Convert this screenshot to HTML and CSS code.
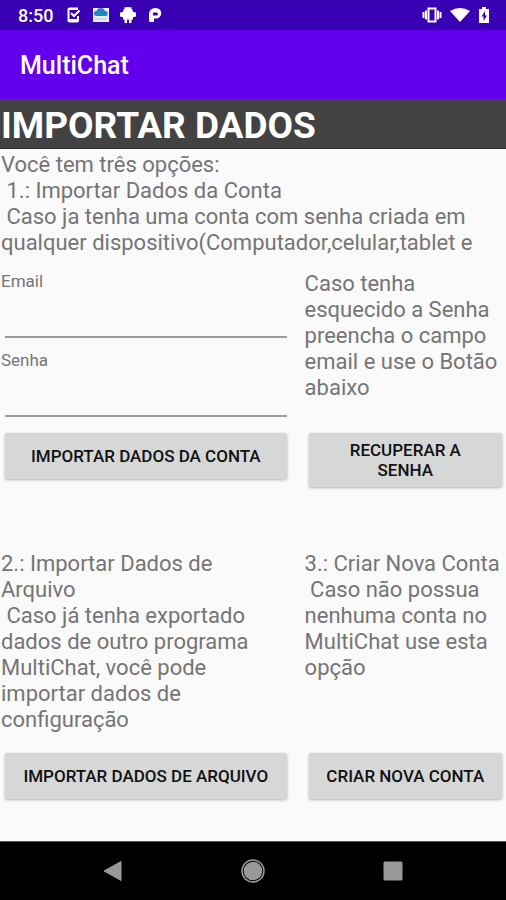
FILE: index.html
```html
<!DOCTYPE html>
<html lang="pt-BR">
<head>
<meta charset="utf-8">
<meta name="viewport" content="width=device-width, initial-scale=1">
<title>MultiChat</title>
<link rel="stylesheet" href="styles.css">
</head>
<body>
<div class="status">
  <span class="clock">8:50</span>
  <div class="status-group notices">
    <svg class="icon" viewBox="0 0 16 18" aria-hidden="true"><path d="M12 10v4.500a1 1 0 0 1-1 1H3.500a1 1 0 0 1-1-1v-11a1 1 0 0 1 1-1H12" fill="none" stroke="#fff" stroke-width="2"/><path d="M5 7l3 3L13.500 4.500" fill="none" stroke="#fff" stroke-width="2"/><path d="M3 13h9v3H3zM3 2h9v2H3z" fill="#fff"/></svg>
    <svg class="icon" viewBox="0 0 16 18" aria-hidden="true"><path d="M0 2h16v14H0z" fill="#e8eef2"/><path d="M3.500 10a2.500 2.500 0 0 1 0-5A4.500 4.500 0 0 1 12 5a2.500 2.500 0 0 1 .5 5z" fill="#2484c2"/><path d="M2 13h12" stroke="#b9c3bd"/></svg>
    <svg class="icon" viewBox="0 0 16 18" aria-hidden="true"><path d="M3 6a5 5 0 0 1 10 0h1.500a1.500 1.500 0 0 1 1.500 1.500v2a1.500 1.500 0 0 1-1.500 1.500H13v2.500h-1.500V16a1.300 1.300 0 0 1-2.600 0v-2.500H7.100V16a1.300 1.300 0 0 1-2.600 0v-2.500H3V11H1.500A1.500 1.500 0 0 1 0 9.500v-2A1.500 1.500 0 0 1 1.500 6z" fill="#fff"/><path d="M4.500 1l1.500 2M11.500 1L10 3" stroke="#fff"/></svg>
    <svg class="icon" viewBox="0 0 16 18" aria-hidden="true"><path fill-rule="evenodd" d="M2 12V8a6 6 0 0 1 6-6h1a5.300 5.300 0 0 1 0 10.600H7V16H3.500a1.500 1.500 0 0 1-1.500-1.500zM6 6.500h3.500a1 1 0 0 1 0 3H6z" fill="#fff"/></svg>
  </div>
  <div class="status-group signals">
    <svg class="icon vibrate" viewBox="0 0 20 16" aria-hidden="true"><path d="M6.500 1.500h7v13h-7z" fill="none" stroke="#fff" stroke-width="2"/><path d="M4 3.500v9M16 3.500v9" stroke="#fff" stroke-width="2"/><path d="M1.500 5v6M18.500 5v6" stroke="#fff" stroke-width="2"/></svg>
    <svg class="icon wifi" viewBox="0 0 20 16" aria-hidden="true"><path d="M0 4Q10-2 20 4L10 15z" fill="#fff"/></svg>
    <svg class="icon battery" viewBox="0 0 12 18" aria-hidden="true"><path d="M1 3h3V1h4v2h3v14H1z" fill="#fff"/><path d="M7 5l-3.500 5.500h2V15L9 9.500H7z" fill="#3a00b0"/></svg>
  </div>
</div>
<header class="appbar">MultiChat</header>
<main>
  <h1>IMPORTAR DADOS</h1>
  <p class="text intro">Você tem três opções:
 1.: Importar Dados da Conta
 Caso ja tenha uma conta com senha criada em qualquer dispositivo(Computador,celular,tablet e</p>
  <section class="columns account">
    <form class="fields">
      <label for="email">Email</label>
      <input id="email" type="email">
      <label for="senha">Senha</label>
      <input id="senha" type="password">
    </form>
    <p class="text">Caso tenha esquecido a Senha preencha o campo email e use o Botão abaixo</p>
    <button type="button">IMPORTAR DADOS DA CONTA</button>
    <button type="button">RECUPERAR A SENHA</button>
  </section>
  <section class="columns">
    <p class="text">2.: Importar Dados de Arquivo
 Caso já tenha exportado dados de outro programa MultiChat, você pode importar dados de configuração</p>
    <p class="text">3.: Criar Nova Conta
 Caso não possua nenhuma conta no MultiChat use esta opção</p>
    <button type="button">IMPORTAR DADOS DE ARQUIVO</button>
    <button type="button">CRIAR NOVA CONTA</button>
  </section>
</main>
<nav class="navbar">
  <button type="button" aria-label="Voltar"><svg viewBox="0 0 24 24"><path d="M3 12L20 2.500v19z" fill="#999" stroke="#999" stroke-linejoin="round"/></svg></button>
  <button type="button" aria-label="Início"><svg viewBox="0 0 24 24"><circle cx="12" cy="12" r="11" fill="none" stroke="#999" stroke-width="1.500"/><circle cx="12" cy="12" r="9.300" fill="#999"/></svg></button>
  <button type="button" aria-label="Recentes"><svg viewBox="0 0 24 24"><rect x="2.500" y="2.500" width="19" height="19" rx="1.500" fill="#999"/></svg></button>
</nav>
</body>
</html>
```
FILE: styles.css
```css
* {
  box-sizing: border-box;
}

body {
  margin: 0;
  min-height: 100vh;
  display: flex;
  flex-direction: column;
  background: #fafafa;
  color: #757575;
  font-family: Roboto, sans-serif;
}

.status {
  display: flex;
  align-items: center;
  height: 30px;
  padding: 0 16px 0 18px;
  background: #3a00b3;
  color: #fff;
}

.clock {
  font-size: 18px;
  font-weight: 500;
}

.status-group {
  display: flex;
  align-items: center;
}

.notices {
  gap: 11px;
  margin-left: 13px;
}

.signals {
  gap: 8px;
  margin-left: auto;
}

.icon {
  width: 16px;
  height: 18px;
}

.vibrate,
.wifi {
  width: 20px;
  height: 16px;
}

.battery {
  width: 12px;
}

.appbar {
  height: 69px;
  padding: 0 20px;
  background: #6200ee;
  color: #fff;
  font-size: 25px;
  font-weight: 500;
  line-height: 72px;
}

main {
  flex: 1;
}

h1 {
  margin: 0;
  padding: 5px 1px 0;
  border-bottom: 1px solid #303030;
  background: #424242;
  color: #fff;
  font-size: 37px;
  font-weight: 700;
  line-height: 44px;
}

p {
  margin: 0;
}

.text {
  padding: 0 3px 0 1px;
  font-size: 22px;
  line-height: 26px;
  white-space: pre-wrap;
}

.intro {
  padding: 3px 1px 15px;
}

.columns {
  display: grid;
  grid-template-columns: minmax(0, 3fr) minmax(0, 2fr);
  align-items: start;
  row-gap: 20px;
}

.columns > :nth-child(odd) {
  margin-right: 12px;
}

.account {
  row-gap: 4px;
  margin-bottom: 64px;
}

.fields {
  display: flex;
  flex-direction: column;
}

label {
  padding-left: 1px;
  font-size: 17px;
  line-height: 20px;
}

input {
  height: 47px;
  margin: 0 5px 12px;
  padding: 0 0 8px;
  border: 0;
  border-bottom: 2px solid #9c9e9d;
  background: transparent;
  color: #212121;
  font: 22px Roboto, sans-serif;
  outline: 0;
}

.columns button {
  min-height: 46px;
  margin: 0 4px 0 5px;
  padding: 7px 12px;
  border: 0;
  border-radius: 2px;
  background: #d6d7d7;
  box-shadow: 0 1px 3px rgba(0, 0, 0, 0.3);
  color: #111;
  font: 500 17px/20px Roboto, sans-serif;
}

.columns button:nth-child(odd) {
  margin-right: 17px;
}

.navbar {
  display: flex;
  justify-content: center;
  align-items: center;
  gap: 100px;
  height: 59px;
  border-top: 1px solid #555;
  background: #000;
}

.navbar button {
  width: 40px;
  height: 40px;
  padding: 8px;
  border: 0;
  background: transparent;
}

.navbar svg {
  display: block;
  width: 24px;
  height: 24px;
}
```
